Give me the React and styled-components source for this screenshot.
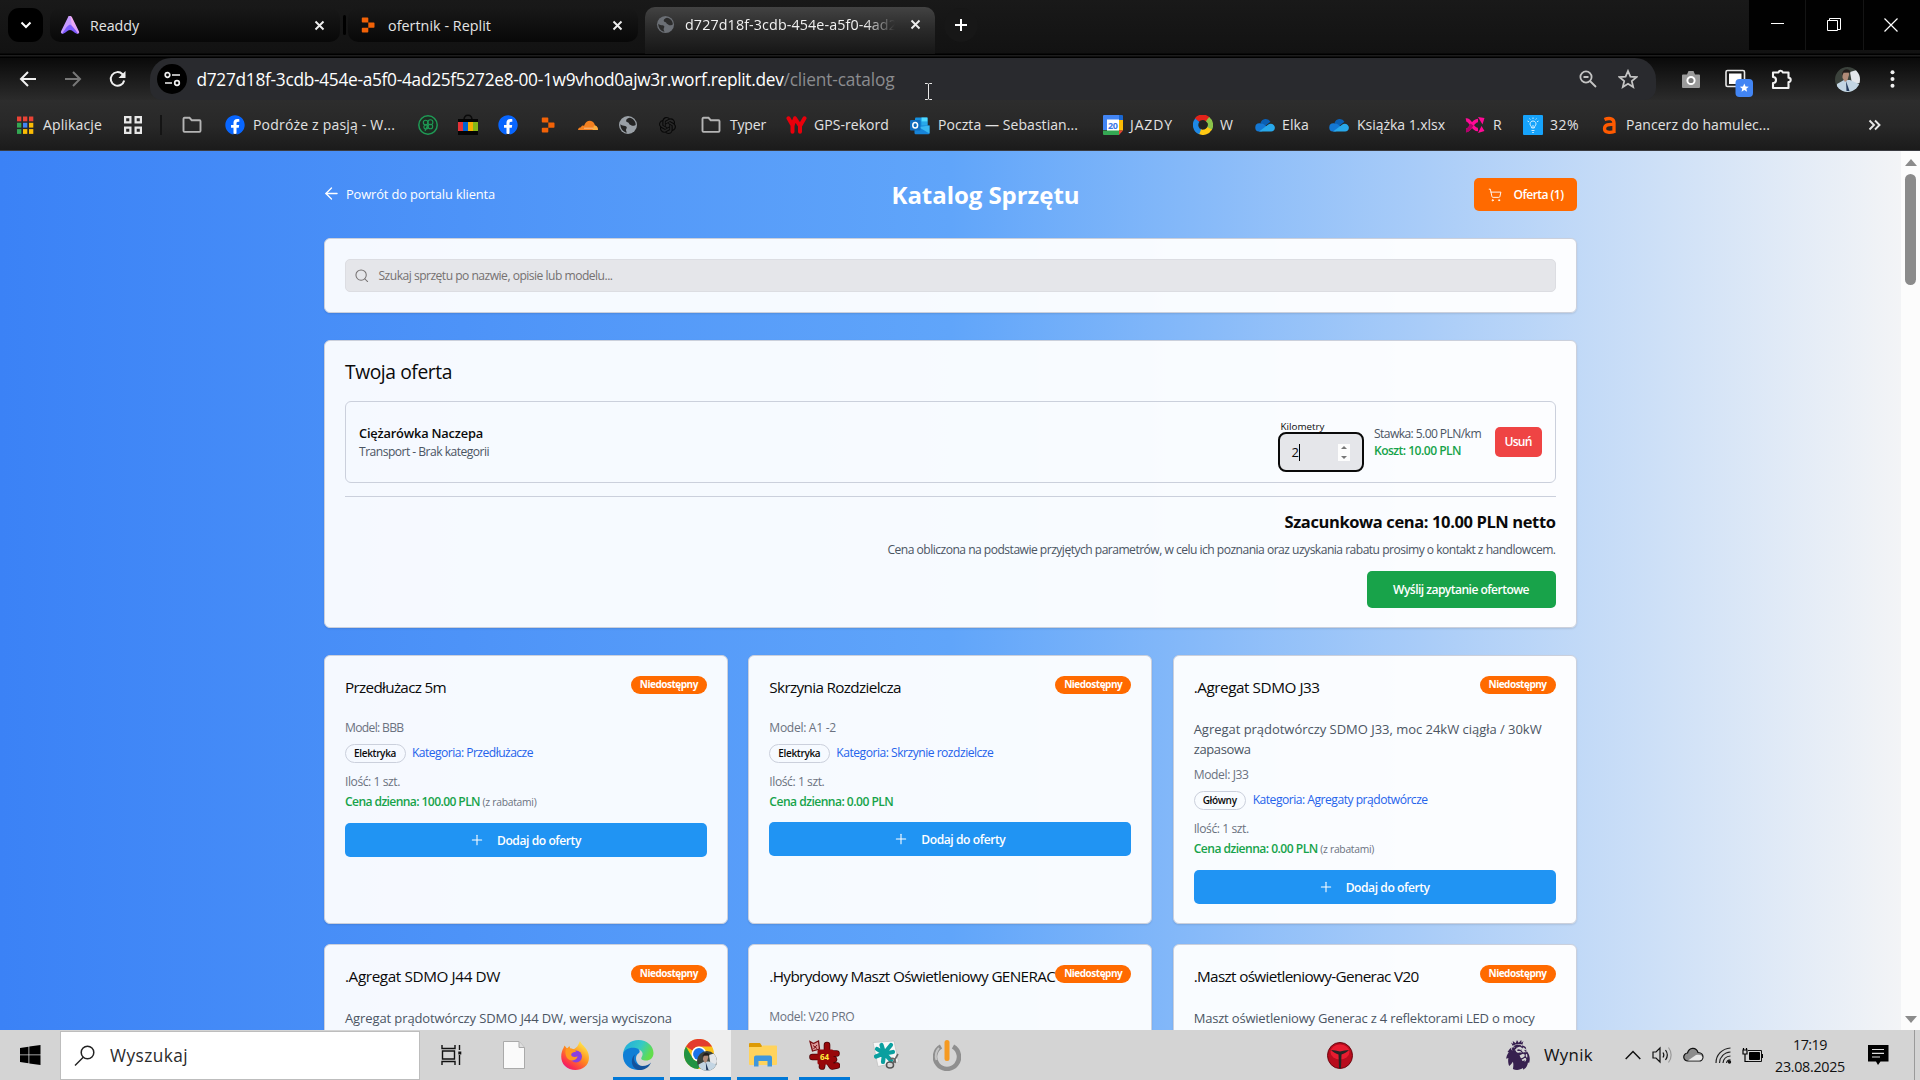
import React, { useLayoutEffect, useRef, useState } from "react";
import styled, { createGlobalStyle, css } from "styled-components";
import { SiOpenai, SiPremierleague } from "react-icons/si";
import { FaFacebook } from "react-icons/fa";
import { ArrowLeft, Search, ShoppingCart, Plus } from "lucide-react";

const Global = createGlobalStyle`
  *{box-sizing:border-box;}
  html,body{margin:0;height:100%;overflow:hidden;}
  body{font-family:"Open Sans","Noto Sans",sans-serif;color:#0a0a0a;}
  svg{display:block;flex:none;}
`;

/* ---------- text ---------- */
const Label = styled.span`
  display:block;flex:none;white-space:pre;
  font-size:${p => p.$size}px;
  font-weight:${p => p.$weight || 400};
  line-height:${p => p.$line || 20}px;
  color:${p => p.$color || "inherit"};
`;

/* Single line label, tracked so that it fills its design width. */
function Text({ width, size = 12.1, weight, line, color, children }) {
  const ref = useRef(null);
  const [tracking, setTracking] = useState(0);
  useLayoutEffect(() => {
    const range = document.createRange();
    range.selectNodeContents(ref.current);
    const natural = range.getBoundingClientRect().width;
    setTracking((width - natural) / children.length);
  }, []);
  return (
    <Label ref={ref} $size={size} $weight={weight} $line={line} $color={color}
      style={{ letterSpacing: tracking, width }}>{children}</Label>
  );
}

/* ---------- window ---------- */
const Window = styled.div`width:1920px;height:1080px;display:flex;flex-direction:column;overflow:hidden;background:#000;`;

const TabStrip = styled.div`
  height:58px;flex:none;display:flex;align-items:flex-start;padding-left:8px;
  background:linear-gradient(#191919 0,#121212 53px,#000 54px,#000 55px,#1d1d1d 55px,#1d1d1d 56px,#000 57px);
`;
const TabSearch = styled.div`width:35px;height:34px;margin-top:8px;border-radius:11px;background:#000;display:grid;place-items:center;`;
const Tab = styled.div`
  width:290px;height:34px;margin:8px 0 0 ${p => p.$gap}px;padding:0 15px 0 10px;border-radius:10px;
  display:flex;align-items:center;color:#e4e4e4;
  background:linear-gradient(#181818,#080808);
`;
const ActiveTab = styled.div`
  width:290px;height:47px;margin:7px 0 0 7px;padding:0 15px 12px 11px;border-radius:10px 10px 0 0;
  display:flex;align-items:center;color:#f1f1f1;background:linear-gradient(#434343,#2b2b2b 45%,#161616);
`;
const TabTitle = styled.div`
  margin-left:10px;padding-top:1px;flex:1;overflow:hidden;
  ${p => p.$fade && css`flex:0 0 211px;margin-right:14px;mask-image:linear-gradient(90deg,#000 180px,transparent 210px);`}
`;
const TabDivider = styled.div`width:3px;height:20px;margin:15px -3px 0 3px;border-radius:2px;background:#000;`;
const NewTab = styled.div`width:34px;height:34px;margin:8px 0 0 9px;border-radius:17px;background:#171717;display:grid;place-items:center;`;
const WindowButtons = styled.div`margin-left:auto;display:flex;gap:1px;background:#141414;`;
const WindowButton = styled.div`width:${p => p.$w}px;height:50px;background:#010101;padding:${p => p.$pad};`;

const Toolbar = styled.div`
  height:42px;flex:none;display:flex;align-items:center;padding-left:19px;
  background:linear-gradient(#0a0a0a,#2b2b2b);
`;
const NavButton = styled.div`width:45px;`;
const Omnibox = styled.div`
  width:1506px;height:42px;margin-left:-4px;padding:0 18px 0 7px;border-radius:21px 21px 12px 12px;
  background:#292a2e;display:flex;align-items:center;
`;
const SiteInfo = styled.div`width:30px;height:30px;margin-right:9.5px;border-radius:50%;background:#000;display:grid;place-items:center;`;
const Url = styled.div`display:flex;flex:1;padding-top:1px;`;
const OmniIcons = styled.div`display:flex;gap:20px;`;
const Extensions = styled.div`display:flex;align-items:center;padding-left:25px;`;
const ExtSlot = styled.div`width:${p => p.$w}px;padding-top:${p => p.$drop || 0}px;`;

const Bookmarks = styled.div`
  height:50px;flex:none;display:flex;align-items:center;padding-left:15px;color:#e2e2e2;
  background:linear-gradient(#2d2d2d,#282828 50%,#1b1b1b);
`;
const Bookmark = styled.div`flex:0 0 ${p => p.$w}px;display:flex;align-items:center;gap:${p => p.$gap ?? 8}px;`;
const BookmarkDivider = styled.div`width:2px;height:20px;margin-right:20px;background:#141414;`;
const ChromeEdge = styled.div`height:1px;flex:none;background:#3a3b40;`;

/* ---------- page ---------- */
const Viewport = styled.div`height:879px;flex:none;display:flex;overflow:hidden;`;
const Page = styled.main`
  width:1901px;padding:27px 324.5px 0 324px;display:flex;flex-direction:column;
  background:linear-gradient(90deg,#3b82f6,#60a5fa 50%,#f3f4f6);
`;
const ScrollTrack = styled.div`width:19px;background:#fcfcfc;display:flex;flex-direction:column;align-items:center;padding:8px 0 7px;`;
const ScrollArrow = styled.div`
  border:6.5px solid transparent;
  ${p => p.$up ? "border-top:0;border-bottom:7px solid #8b8b8b;" : "border-bottom:0;border-top:7px solid #8b8b8b;margin-top:auto;"}
`;
const ScrollThumb = styled.div`width:11px;height:111px;margin-top:8px;border-radius:6px;background:#8b8b8b;`;

const Header = styled.header`height:33px;flex:none;display:flex;align-items:center;color:#fff;`;
const BackLink = styled.div`width:250px;margin:-2px 0 0 -2px;display:flex;align-items:center;gap:5px;`;
const Title = styled.div`margin-left:319.5px;margin-right:auto;`;
const CartButton = styled.button`
  width:103px;height:33px;padding:0 0 0 14px;border:0;border-radius:5px;background:#ff6a00;color:#fff;
  font:inherit;display:flex;align-items:center;gap:12px;
`;
const Card = styled.section`
  border:1px solid #cbd0dc;border-radius:6px;background:rgba(255,255,255,.95);
  box-shadow:0 1px 2px rgba(0,0,0,.1);
`;
const SearchCard = styled(Card)`height:75px;flex:none;margin-top:27px;padding:20px;`;
const SearchField = styled.div`
  height:33px;padding:1px 8px 0;border:1px solid #dcdde2;border-radius:5px;background:#e5e6ea;color:#757171;
  display:flex;align-items:center;gap:9px;
`;
const OfferCard = styled(Card)`height:288px;flex:none;margin-top:27px;padding:17px 20px 20px;display:flex;flex-direction:column;`;
const OfferItem = styled.div`
  height:82px;flex:none;margin-top:16px;padding:0 13px;border:1px solid #cbd0dc;border-radius:6px;
  display:flex;align-items:center;
`;
const ItemInfo = styled.div`flex:1;`;
const Kilometers = styled.div`width:86px;height:56px;padding-top:7px;`;
const KmLabel = styled.div`padding-left:3px;height:11px;`;
const NumberField = styled.div`
  height:40px;padding:0 12px;border:2px solid #0a0a0a;border-radius:8px;background:#e5e6ea;
  display:flex;align-items:center;
`;
const Caret = styled.i`width:1px;height:17px;background:#000;`;
const Spinner = styled.div`
  width:12px;height:17px;margin-left:auto;background:#fdfdfd;display:flex;flex-direction:column;
  align-items:center;justify-content:space-between;padding:2px 0;
`;
const SpinArrow = styled.i`border:3px solid transparent;${p => p.$up ? "border-top:0;border-bottom:3px solid #777;" : "border-bottom:0;border-top:3px solid #777;"}`;
const Cost = styled.div`width:107px;margin:0 13.5px 0 10.5px;`;
const RemoveButton = styled.button`
  width:47px;height:30px;padding:0 0 0 10px;border:0;border-radius:5px;background:#ef4444;color:#fff;font:inherit;
`;
const Summary = styled.div`
  margin-top:13px;padding-top:13px;border-top:1px solid #cbd0dc;
  display:flex;flex-direction:column;align-items:flex-end;gap:4px;
`;
const SendButton = styled.button`
  width:189px;height:37px;margin-top:6px;padding:1px 0 0 26.5px;border:0;border-radius:5px;background:#18a34a;color:#fff;font:inherit;
`;
const Grid = styled.div`
  margin-top:27px;display:grid;grid-template-columns:repeat(3,1fr);grid-auto-rows:269px;gap:20.4px 20.5px;
`;
const ProductCard = styled(Card)`padding:20px;`;
const ProductHead = styled.div`height:42px;display:flex;justify-content:space-between;`;
const TitleSlot = styled.div`width:0;`;
const Status = styled.div`
  position:relative;width:76px;height:18px;padding-left:9px;border-radius:9px;background:#ff6a00;color:#fff;
`;
const Description = styled.div`margin:1px 0 6px;`;
const Tags = styled.div`height:19px;margin:6px 0 9px;display:flex;gap:6.5px;`;
const Tag = styled.span`height:19px;padding:0 8.5px 0 8px;border:1px solid #cbd0dc;border-radius:10px;`;
const Price = styled.div`display:flex;gap:2.5px;`;
const AddButton = styled.button`
  width:100%;height:33.5px;margin-top:10.2px;padding:1px 0 0 124px;border:0;border-radius:5px;background:#2094f3;color:#fff;font:inherit;
  display:flex;align-items:center;gap:12px;
`;

/* ---------- taskbar ---------- */
const Taskbar = styled.footer`height:50px;flex:none;display:flex;background:#d4d4d4;`;
const TaskSlot = styled.div`
  flex:0 0 ${p => p.$w}px;height:50px;display:grid;place-items:center;
  background:${p => (p.$active ? "#eee" : "none")};
  margin-right:${p => p.$gap || 0}px;
  ${p => p.$open && css`box-shadow:inset 0 -3px #0078d7;`}
`;
const StartSlot = styled.div`width:60px;padding:15px 0 0 20px;`;
const TaskSearch = styled.div`
  width:360px;height:49px;margin-top:1px;padding-left:13px;border:1px solid #bdbdbd;background:#fff;
  display:flex;align-items:center;gap:14px;color:#2b2b2b;
`;
const Tray = styled.div`margin-left:auto;height:50px;display:flex;align-items:center;color:#111;`;
const TrayIcon = styled.div`width:${p => p.$w}px;`;
const LionSlot = styled.div`width:41px;margin-left:-4px;`;
const Clock = styled.div`width:70px;margin-right:23px;display:flex;flex-direction:column;align-items:center;`;
const ShowDesktop = styled.div`width:6px;height:50px;margin-left:25px;border-left:1px solid #9a9a9a;`;

/* ---------- cursor ---------- */
const Cursor = styled.div`position:absolute;left:925px;top:83px;`;

/* ---------- drawings ---------- */
const Svg = ({ w = 20, h = w, vb, children, ...rest }) => (
  <svg width={w} height={h} viewBox={vb || `0 0 ${w} ${h}`} fill="none" {...rest}>{children}</svg>
);
const CloseX = () => <Svg w={11}><path d="M1.5 1.5l8 8M9.5 1.5l-8 8" stroke="#eee" strokeWidth="1.9" /></Svg>;
const ReplitIcon = () => (
  <Svg>
    <path d="M4.600 2.500h4.900a.8.8 0 0 1 .8.8v4.200H4.600a.8.8 0 0 1-.8-.8V3.300a.8.8 0 0 1 .8-.8zM10.300 7.500h5.400a.8.8 0 0 1 .8.8v3.600a.8.8 0 0 1-.8.8h-5.400zM4.600 12.700h5.700v4a.8.8 0 0 1-.8.8H4.600a.8.8 0 0 1-.8-.8v-3.200a.8.8 0 0 1 .8-.8z" fill="#f26207" />
  </Svg>
);
const Globe = ({ color = "#9aa0a6", ink = "#252525", size = 20 }) => (
  <Svg w={size} vb="0 0 20 20">
    <circle cx="10" cy="10" r="9" fill={color} />
    <path d="M11.500 2.800c-2 .7-3.800 1.700-3.300 3.400.4 1.300 2.600.8 2.800 2.300.2 1.300 1.700 1.200 2.500 1.900 1 .9 3.700.3 4.200-.6.1-3.400-2.600-6.500-6.200-7zM2.400 9.200c1.200 1.400 3.200 1.300 4.800 1.700 1.600.4 2 1.600 1.200 2.800-.7 1-.4 2.300.6 3.900-3.600-.2-6.800-4-6.600-8.400z" fill={ink} />
  </Svg>
);
const Folder = () => <Svg w={20} h={18}><path d="M1.500 14.700V3c0-.7.400-1.200 1-1.200h5l2.200 2.400h7.800c.6 0 1 .5 1 1.100v9.400c0 .7-.4 1.200-1 1.200h-15c-.6 0-1-.5-1-1.200z" stroke="#b4b4b4" strokeWidth="1.900" /></Svg>;
const Facebook = () => <Svg><circle cx="10" cy="10" r="9" fill="#fff" /><FaFacebook size={20} color="#0866ff" /></Svg>;
const OneDrive = () => (
  <Svg><path d="M5.500 8a5.500 5.500 0 0 1 10-1.300L10 11z" fill="#0a5fb4" /><path d="M4 16.500a4 4 0 0 1 .8-8.200c3 0 5 1.500 8 4.200l-6 4z" fill="#1478d4" /><path d="M4 16.500l9-6.800c.8-.7 1.600-1 2.700-1 2.300 0 4.200 1.800 4.200 4s-1.700 3.800-3.800 3.800z" fill="#28a8ea" /></Svg>
);
const Apps = () => {
  const colors = ["#ea4335", "#ea4335", "#ea4335", "#34a853", "#4285f4", "#fbbc04", "#34a853", "#fbbc04", "#fbbc04"];
  return <Svg>{colors.map((c, i) => <rect key={i} x={2 + (i % 3) * 6} y={1.5 + Math.floor(i / 3) * 6.3} width="4.3" height="4.8" fill={c} />)}</Svg>;
};
const Chrome = ({ size = 20 }) => (
  <Svg w={size} vb="0 0 32 32">
    <circle cx="16" cy="16" r="16" fill="#fbc116" />
    <path d="M2.100 8a16 16 0 0 1 27.800 0H16a8 8 0 0 0-7 4.200z" fill="#e33b2e" />
    <path d="M2.100 8A16 16 0 0 0 15 32l7.500-11.500L16 24a8 8 0 0 1-7-4z" fill="#229342" />
    <circle cx="16" cy="16" r="8" fill="#fff" /><circle cx="16" cy="16" r="6.300" fill="#1a73e8" />
  </Svg>
);
const ReaddyIcon = () => (
  <Svg w={20} h={20}>
    <defs><linearGradient id="rd" x1="0" y1="0" x2="1" y2="1"><stop offset="0" stopColor="#ffb4f0" /><stop offset="1" stopColor="#d59bff" /></linearGradient></defs>
    <path d="M8 2.300C8.700.7 11.300.7 12 2.300L19 16.500c.6 1.500-.4 2.500-1.700 2.200L10 10z" fill="url(#rd)" />
    <path d="M8 2.300C8.500 1 10 .8 10.500 1.200L12 11 2.700 18.700C1 18.500.4 17.500 1.200 16z" fill="#c79bff" />
    <path d="M10 9.500c2 1 5.500 5 7.800 9.100-3 .6-4.800-3.600-7.800-3.600s-4.500 4-8 3.600C3.500 17.500 6.500 10.500 10 9.500z" fill="#7d5cff" />
  </Svg>
);
const Bag = () => (
  <Svg w={20} h={22}><path d="M6 6c0-6.500 8-6.500 8 0" stroke="#0a0a0a" strokeWidth="1.500" /><path d="M0 5h20v16H0z" fill="#050505" /><path d="M0 8h5v9H0z" fill="#e53238" /><path d="M5 8h5v9H5z" fill="#0064d2" /><path d="M10 8h5v9h-5z" fill="#f5af02" /><path d="M15 8h5v9h-5z" fill="#86b817" /></Svg>
);
const Clover = () => (
  <Svg><circle cx="10" cy="10" r="9.200" stroke="#1f9a55" strokeWidth="1.500" fill="#1d2b22" /><g stroke="#1f9a55" strokeWidth="1.100"><circle cx="7.600" cy="7.600" r="2.300" /><circle cx="12.400" cy="7.200" r="2.500" /><circle cx="12.400" cy="11.500" r="2.300" /><circle cx="7.900" cy="12" r="2" /><path d="M10 9.500l-3 6.500" /></g></Svg>
);
const Cloud = () => (
  <Svg><path d="M0 15c.2-2 1.300-2.800 3-2.800.4-1.500 1.800-2 3-1.300C7 7.500 9.500 5.700 12 5.800c2.800.2 4.500 2.200 5 4.600 1.800.2 3 2 3 4.600z" fill="#f38020" /><path d="M14.500 15l1.500-4.600c2.200-.2 4 1.600 4 4.600z" fill="#faae40" /><path d="M6 13.200h9" stroke="#ffd9b0" strokeWidth=".7" /></Svg>
);
const Outlook = () => (
  <Svg><path d="M6 2.500h10.500a1 1 0 0 1 1 1V11H5V3.500a1 1 0 0 1 1-1z" fill="#1490df" /><path d="M11.500 2.500h6v4.200h-6z" fill="#50d9ff" /><path d="M11.500 6.700h6V11h-6z" fill="#28a8ea" /><path d="M4.500 10.500h15V18a1.200 1.200 0 0 1-1.200 1.200H5.700A1.200 1.200 0 0 1 4.500 18z" fill="#1784d9" /><path d="M19.500 10.500v8l-11-6.500z" fill="#38b6f1" /><rect x="0" y="5" width="10.500" height="10.500" rx="1" fill="#0f6cbd" /><ellipse cx="5.200" cy="10.200" rx="2.400" ry="2.800" stroke="#fff" strokeWidth="1.500" /></Svg>
);
const CalLabel = styled.text`font:700 9px "Open Sans",sans-serif;fill:#3b78e7;`;
const Calendar = () => (
  <Svg><path d="M1 0h15v5H5v10H0V1a1 1 0 0 1 1-1z" fill="#4285f4" /><path d="M4 4.500h12v11.500H4z" fill="#fff" /><path d="M16 0h3a1 1 0 0 1 1 1v4h-4z" fill="#1967d2" /><path d="M16 5h4v10.500h-4z" fill="#fbbc04" /><path d="M0 15.500h16V20H1a1 1 0 0 1-1-1z" fill="#34a853" /><path d="M16 15.500h4L16 20z" fill="#ea4335" /><CalLabel x="5" y="13.500" textLength="10">20</CalLabel></Svg>
);
const RecordLogo = () => <Svg w={21} h={18}><path d="M2.500 2.300l4 7v6.500M9 2.300L6.500 9.500M9 2.300l5 7.500v6M18.500 2.300L14 10" stroke="#e9000b" strokeWidth="4" strokeLinecap="round" /></Svg>;
const Pinwheel = () => (
  <Svg>
    <g strokeWidth="5.400">
      <path d="M3.800 5.100A7.300 7.300 0 0 1 15.200 4.800" stroke="#e2231a" />
      <path d="M14.500 4.200A7.300 7.300 0 0 1 16.300 14" stroke="#8bc34a" />
      <path d="M16.500 13.300A7.300 7.300 0 0 1 6.500 16.400" stroke="#ffc913" />
      <path d="M7.200 16.800A7.300 7.300 0 0 1 4.300 5.300" stroke="#1e88e5" />
    </g>
    <path d="M7 6.500l4-1.300 3.500 3.300-1 4.500-4 1.500L6 10.500z" fill="#222" />
  </Svg>
);
const Shuffle = () => <Svg><path d="M1 5c5-1 6 10 12 9.500M1 15.500c5 0 6-10 12-10" stroke="#ff0a96" strokeWidth="3.600" /><path d="M13 2l6.500 1-2 6.500zM13 18l6.500-2-3-5z" fill="#ff0a96" /><path d="M1 15.500c3 0 4.500-3.500 6-6" stroke="#b3006b" strokeWidth="3.600" /></Svg>;
const Bulb = () => <Svg><rect width="20" height="20" rx="1" fill="#16a3fb" /><path d="M7 9c0-4 6-4 6 0 0 1.500-1.500 2-1.700 4H8.700C8.500 11 7 10.500 7 9zM8.500 15.500h3M9.200 17.500h1.600M10 10v3M4.500 6l1.500.8M15.500 6l-1.500.8M10 2.500V4M6.500 3.500l.8 1M13.500 3.500l-.8 1" stroke="#fff" strokeWidth=".8" /></Svg>;
const Allegro = () => <Svg w={18} h={20}><path d="M4.500 4.500C8 3 14 2.500 14 8v10M14 9.500c-5-.5-9.500 0-9.500 4.200 0 4.300 6 4 9.500 3" stroke="#ff5a00" strokeWidth="3.300" /></Svg>;

const Avatar = () => (
  <Svg w={25} h={25}>
    <defs><clipPath id="av"><circle cx="12.500" cy="12.500" r="12.500" /></clipPath></defs>
    <g clipPath="url(#av)"><path d="M0 0h25v25H0z" fill="#3b423c" /><path d="M15 5l10-3v14l-8 1z" fill="#e3e6ea" /><path d="M2 17l7-4h6l9 4v9H2z" fill="#c3d5e3" /><path d="M7.500 5c2-3 7-2 6.500 3l-1.500 5-2.500 2-2.500-4z" fill="#b08a78" /><path d="M7 6c1-5 8-5 8.500-.5l-7 .3-1 3z" fill="#201c1b" /><path d="M11 14l3.500 10h-3z" fill="#253b5c" /></g>
  </Svg>
);
const Firefox = () => (
  <Svg w={29} h={29}>
    <defs><linearGradient id="ff" x1=".9" y1="0" x2=".2" y2="1"><stop offset=".1" stopColor="#ffe84a" /><stop offset=".5" stopColor="#ff8a1e" /><stop offset=".85" stopColor="#fc2d4f" /><stop offset="1" stopColor="#e31587" /></linearGradient></defs>
    <path d="M19 0c1 3 4 4.500 6.500 8.500C29.500 15 28.500 22 23.500 26S9 30 4 25-.5 12 2.500 7l1-2.500L6 7.500 8.500 5l1 3.500c2 0 4-.3 5-1.500 2.500-1.500 3-4.500 4.500-7z" fill="url(#ff)" />
    <circle cx="15" cy="15.500" r="6" fill="#8b3fe0" /><path d="M5 8c4-2 9 0 10 2.800-2 .5-4.500.6-4.800 3 0 2.200 4 3 6.500 1.500-1 4-5.500 5-8 3.800C5 17.500 3.500 12 5 8z" fill="#ff9a20" />
  </Svg>
);
const EdgeIcon = () => (
  <Svg w={31} h={30}>
    <defs><linearGradient id="eg" x1="0" y1="0" x2="1" y2=".4"><stop offset="0" stopColor="#1fa8e0" /><stop offset=".6" stopColor="#35c9c6" /><stop offset="1" stopColor="#62dd4c" /></linearGradient></defs>
    <path d="M0 14C1 5 7.500 0 15.500 0 24 0 30.500 6 30.500 13c0 5-3.500 7.500-7.500 7.500-3.500 0-5.500-1.300-4.500-3C22 12 17 9 12.500 9 6.500 9 1 11 0 14z" fill="url(#eg)" />
    <path d="M0 14.500C.5 9.500 7 7 12.500 8c4 .8 5 3 3.500 5-5 3-3.500 11 3 13.500l-2 3.400C6 31-.5 23 0 14.500z" fill="#0f7fd6" />
    <path d="M12.500 14c-4 5 0 12 7 12 4 0 6.500-1.500 8.500-3.500C26 27.500 21 30.500 16 30 8 29 6.500 18 12.500 14z" fill="#14539c" />
  </Svg>
);
const ChromeUser = () => (
  <Svg w={33} h={32}><Chrome size={30} /><g transform="translate(13 12) scale(.8)"><Avatar /></g></Svg>
);
const Explorer = () => <Svg w={28} h={24}><path d="M0 1a1 1 0 0 1 1-1h10l2 3v3H0z" fill="#dd9a04" /><path d="M0 4h12l2-1.500h13a1 1 0 0 1 1 1V21a1 1 0 0 1-1 1H1a1 1 0 0 1-1-1z" fill="#ffd35c" /><path d="M5 23.500V15c0-1.500.5-2.500 2-2.500h14c1.500 0 2 1 2 2.500v8.500h-4.500V18h-9v5.500z" fill="#3f97dc" /></Svg>;
const SplatLabel = styled.text`font:700 8px "Open Sans",sans-serif;fill:#ffee3a;`;
const Irfan64 = () => (
  <Svg w={31} h={31}>
    <g strokeLinecap="round" strokeLinejoin="round">
      <path d="M18 5v8M27.500 13.500H18M3.500 17H13M13 26.500l1-8M18 19l5 7.500 5-1M25 19.500l-5-1" stroke="#4d0507" strokeWidth="6.600" />
      <path d="M10 11h13v12H10z" fill="#98070a" stroke="#98070a" strokeWidth="3" />
      <path d="M18 5v8M27.500 13.500H18M3.500 17H13M13 26.500l1-8M18 19l5 7.500 5-1M25 19.500l-5-1" stroke="#98070a" strokeWidth="5" />
    </g>
    <path d="M1 1.500l3.500 2L9.500 1l1 8-7 2z" fill="#d99" stroke="#7a1014" strokeWidth="1.300" /><path d="M4 5.500l4 3M8 5L4.500 9" stroke="#7a1014" />
    <SplatLabel x="11" y="20">64</SplatLabel>
  </Svg>
);
const IrfanTeal = () => (
  <Svg w={28} h={30}>
    <path d="M1 2.500L22 1l4.500 21L6 26.500z" fill="#f7f7f7" stroke="#c2c2c2" strokeWidth=".8" />
    <path d="M12 13L9.500 5M12.500 13L19 5M13 13.500l8-1.500M13 14l6 6.500M12 14l-1 8M11.500 13.500L4 16.500M11.500 13L5 9" stroke="#0a9f9f" strokeWidth="4.200" strokeLinecap="round" />
    <ellipse cx="18" cy="25" rx="3.500" ry="3" stroke="#555" strokeWidth="1.600" /><path d="M18 19c4-2 6 1 5 4M21 23l5-9" stroke="#666" strokeWidth="1.600" />
  </Svg>
);
const Power = () => <Svg w={28} h={31}><path d="M8 6.500a12 12 0 1 0 12 0" stroke="#8f8f8f" strokeWidth="4.500" /><path d="M6 8a12 12 0 0 0-2.500 12" stroke="#c4c4c4" strokeWidth="2" /><rect x="11.500" y="0" width="5" height="21" rx="2.500" fill="#f59a22" /></Svg>;
const RedMask = () => <Svg w={26} h={27}><ellipse cx="13" cy="13.500" rx="12.500" ry="13" fill="#b80c1d" stroke="#6b0710" /><ellipse cx="13" cy="10" rx="9.500" ry="7.500" fill="#e81c30" /><path d="M4 8c3 0 6 1 9 1.500C16 9 19 8 22 8c-2 2.500-5 3.500-7.500 4.500L14 26h-2l-.5-13.500C9 11.500 6 10.500 4 8z" fill="#252525" /></Svg>;

/* ---------- sections ---------- */
function BookmarksBar() {
  const name = (width, text) => <Text width={width} size={14}>{text}</Text>;
  return (
    <Bookmarks>
      <Bookmark $w={108}><Apps />{name(59, "Aplikacje")}</Bookmark>
      <Bookmark $w={37}><Svg><g stroke="#e8e8e8" strokeWidth="2.200"><path d="M2.100 2.100h5.300v5.300H2.100zM12.600 2.100h5.300v5.300h-5.300zM2.100 12.600h5.300v5.300H2.100zM12.600 12.600h5.300v5.300h-5.300z" /></g></Svg></Bookmark>
      <BookmarkDivider />
      <Bookmark $w={43}><Folder /></Bookmark>
      <Bookmark $w={193}><Facebook />{name(142, "Podróże z pasją - W...")}</Bookmark>
      <Bookmark $w={40}><Clover /></Bookmark>
      <Bookmark $w={40}><Bag /></Bookmark>
      <Bookmark $w={40}><Facebook /></Bookmark>
      <Bookmark $w={40}><ReplitIcon /></Bookmark>
      <Bookmark $w={40}><Cloud /></Bookmark>
      <Bookmark $w={41}><Globe /></Bookmark>
      <Bookmark $w={42}><SiOpenai size={17} color="#080808" /></Bookmark>
      <Bookmark $w={85} $gap={9}><Folder />{name(36, "Typer")}</Bookmark>
      <Bookmark $w={124} $gap={7}><RecordLogo />{name(75, "GPS-rekord")}</Bookmark>
      <Bookmark $w={193}><Outlook />{name(140, "Poczta — Sebastian...")}</Bookmark>
      <Bookmark $w={90} $gap={7}><Calendar />{name(43, "JAZDY")}</Bookmark>
      <Bookmark $w={62} $gap={7}><Pinwheel />{name(14, "W")}</Bookmark>
      <Bookmark $w={74} $gap={7}><OneDrive />{name(27, "Elka")}</Bookmark>
      <Bookmark $w={136}><OneDrive />{name(88, "Książka 1.xlsx")}</Bookmark>
      <Bookmark $w={58}><Shuffle />{name(9, "R")}</Bookmark>
      <Bookmark $w={77} $gap={7}><Bulb />{name(29, "32%")}</Bookmark>
      <Bookmark $w={268}><Allegro />{name(144, "Pancerz do hamulec...")}</Bookmark>
      <Svg w={13} h={12}><path d="M1.500 1.500L6 6l-4.500 4.500M7 1.500L11.500 6 7 10.500" stroke="#e8e8e8" strokeWidth="1.900" /></Svg>
    </Bookmarks>
  );
}

const products = [
  { title: ["Przedłużacz 5m", 101], model: ["Model: BBB", 58.5], tag: ["Elektryka", 42], category: ["Kategoria: Przedłużacze", 121], price: ["Cena dzienna: 100.00 PLN", 135], discount: true },
  { title: ["Skrzynia Rozdzielcza", 131.5], model: ["Model: A1 -2", 66.5], tag: ["Elektryka", 42], category: ["Kategoria: Skrzynie rozdzielcze", 157], price: ["Cena dzienna: 0.00 PLN", 124] },
  { title: [".Agregat SDMO J33", 126], lines: [["Agregat prądotwórczy SDMO J33, moc 24kW ciągła / 30kW", 348], ["zapasowa", 57]], model: ["Model: J33", 55], tag: ["Główny", 34], category: ["Kategoria: Agregaty prądotwórcze", 175], price: ["Cena dzienna: 0.00 PLN", 124], discount: true },
  { title: [".Agregat SDMO J44 DW", 155], lines: [["Agregat prądotwórczy SDMO J44 DW, wersja wyciszona", 327]] },
  { title: [".Hybrydowy Maszt Oświetleniowy GENERAC", 286], model: ["Model: V20 PRO", 85] },
  { title: [".Maszt oświetleniowy-Generac V20", 225], lines: [["Maszt oświetleniowy Generac z 4 reflektorami LED o mocy", 341]] },
];

function Product({ title, lines, model, tag, category, price, discount }) {
  return (
    <ProductCard>
      <ProductHead>
        <TitleSlot><Text width={title[1]} size={15.3} weight={500} line={23}>{title[0]}</Text></TitleSlot>
        <Status><Text width={58} size={10} weight={700} line={17}>Niedostępny</Text></Status>
      </ProductHead>
      {lines && <Description>{lines.map(l => <Text key={l[0]} width={l[1]} size={13} line={20} color="#4b5563">{l[0]}</Text>)}</Description>}
      {model && <Text width={model[1]} line={20} color="#6b7280">{model[0]}</Text>}
      {tag && <>
        <Tags><Tag><Text width={tag[1]} size={10} weight={600} line={17}>{tag[0]}</Text></Tag><Text width={category[1]} line={17} color="#2563eb">{category[0]}</Text></Tags>
        <Text width={55} line={20} color="#6b7280">Ilość: 1 szt.</Text>
        <Price><Text width={price[1]} weight={600} color="#16a34a">{price[0]}</Text>{discount && <Text width={54} size={10.3} line={21} color="#6b7280">(z rabatami)</Text>}</Price>
        <AddButton><Plus size={16} strokeWidth={1.6} /><Text width={84} weight={600} line={21}>Dodaj do oferty</Text></AddButton>
      </>}
    </ProductCard>
  );
}

export default function App() {
  return (
    <Window>
      <Global />
      <TabStrip>
        <TabSearch><Svg w={12} h={8}><path d="M1.500 1.500L6 6l4.500-4.500" stroke="#fff" strokeWidth="2" /></Svg></TabSearch>
        <Tab $gap={7}><ReaddyIcon /><TabTitle><Text width={49} size={14.3}>Readdy</Text></TabTitle><CloseX /></Tab>
        <TabDivider />
        <Tab $gap={5}><ReplitIcon /><TabTitle><Text width={103} size={14.3}>ofertnik - Replit</Text></TabTitle><CloseX /></Tab>
        <ActiveTab><Globe color="#6b6f75" ink="#2c2c2c" size={19} /><TabTitle $fade><Text width={212} size={14.3}>d727d18f-3cdb-454e-a5f0-4ad2</Text></TabTitle><CloseX /></ActiveTab>
        <NewTab><Svg w={14}><path d="M7 1v12M1 7h12" stroke="#fff" strokeWidth="2" /></Svg></NewTab>
        <WindowButtons>
          <WindowButton $w={56} $pad="23px 0 0 22px"><Svg w={13} h={1}><path d="M0 .5h13" stroke="#fff" /></Svg></WindowButton>
          <WindowButton $w={57} $pad="18px 0 0 21px"><Svg w={14} h={14}><path d="M.5 2.500h10v10H.5zM2.500 2.500V.5h11v11h-3" stroke="#fff" /></Svg></WindowButton>
          <WindowButton $w={56} $pad="18px 0 0 20px"><Svg w={14} h={14}><path d="M.5.5l13 13M13.500.5l-13 13" stroke="#fff" strokeWidth="1.200" /></Svg></WindowButton>
        </WindowButtons>
      </TabStrip>

      <Toolbar>
        <NavButton><Svg w={18} h={16}><path d="M17 8H2M9 1L2 8l7 7" stroke="#f0f0f0" strokeWidth="2" /></Svg></NavButton>
        <NavButton><Svg w={18} h={16}><path d="M1 8h15M9 1l7 7-7 7" stroke="#777" strokeWidth="2" /></Svg></NavButton>
        <NavButton><Svg w={18} h={18}><path d="M15.200 10.500A6.800 6.800 0 1 1 13.500 4.200L15.500 6.500" stroke="#f0f0f0" strokeWidth="2" /><path d="M16.500 1v7h-7z" fill="#f0f0f0" /></Svg></NavButton>
        <Omnibox>
          <SiteInfo><Svg w={17} h={16}><g stroke="#f0f0f0" strokeWidth="1.700"><circle cx="3.500" cy="4" r="2.300" /><path d="M8 4h8M1 12h7" /><circle cx="13" cy="12" r="2.300" /></g></Svg></SiteInfo>
          <Url>
            <Text width={587} size={17.3} line={24} color="#fff">d727d18f-3cdb-454e-a5f0-4ad25f5272e8-00-1w9vhod0ajw3r.worf.replit.dev</Text>
            <Text width={111} size={17.3} line={24} color="#8b8c8f">/client-catalog</Text>
          </Url>
          <OmniIcons>
            <Svg w={20}><circle cx="8" cy="8" r="5.600" stroke="#c4c4c4" strokeWidth="1.800" /><path d="M5.500 8h5M12 12l6 6" stroke="#c4c4c4" strokeWidth="1.800" /></Svg>
            <Svg w={20}><path d="M10 2l2.400 5.600 6 .5-4.600 4 1.400 5.900-5.200-3.200L4.800 18l1.400-5.900-4.600-4 6-.5z" stroke="#c4c4c4" strokeWidth="1.800" /></Svg>
          </OmniIcons>
        </Omnibox>
        <Extensions>
          <ExtSlot $w={44}><Svg w={20}><path d="M2 5.500h4L7.500 2h5L14 5.500h4a1 1 0 0 1 1 1V18a1 1 0 0 1-1 1H2a1 1 0 0 1-1-1V6.500a1 1 0 0 1 1-1z" fill="#9b9b9b" /><circle cx="10" cy="11.500" r="3.600" fill="#777" stroke="#fff" strokeWidth="2" /></Svg></ExtSlot>
          <ExtSlot $w={46} $drop={7}><Svg w={29} h={28}><rect x="1" y="1.500" width="18.500" height="16" rx="1.500" stroke="#e8e8e8" strokeWidth="1.600" /><path d="M4 4.500h12.500v10.500H4z" fill="#fff" /><rect x="10.500" y="10" width="17.500" height="18" rx="4" fill="#4285f4" /><path d="M19.300 14.500l1.300 3 3.200.2-2.500 2 .8 3.100-2.800-1.700-2.800 1.700.8-3.100-2.500-2 3.200-.2z" fill="#fff" /></Svg></ExtSlot>
          <ExtSlot $w={64}><Svg w={22} h={22}><path d="M2 4.500h5.500a2.200 2.200 0 0 1 4.300 0H17.500v5.200a2.200 2.200 0 0 1 0 4.400V20H2v-5a3 3 0 0 0 0-6z" stroke="#f0f0f0" strokeWidth="2.100" strokeLinejoin="round" /></Svg></ExtSlot>
          <ExtSlot $w={55}><Avatar /></ExtSlot>
          <Svg w={5} h={18}><g fill="#f0f0f0"><circle cx="2.500" cy="2.200" r="2" /><circle cx="2.500" cy="9" r="2" /><circle cx="2.500" cy="15.800" r="2" /></g></Svg>
        </Extensions>
      </Toolbar>
      <BookmarksBar />
      <ChromeEdge />

      <Viewport>
        <Page>
          <Header>
            <BackLink><ArrowLeft size={19} strokeWidth={1.7} /><Text width={149} size={12.9}>Powrót do portalu klienta</Text></BackLink>
            <Title><Text width={188} size={24} weight={700} line={30}>Katalog Sprzętu</Text></Title>
            <CartButton><ShoppingCart size={14} strokeWidth={1.6} /><Text width={50} weight={600}>Oferta (1)</Text></CartButton>
          </Header>

          <SearchCard>
            <SearchField><Search size={15.5} strokeWidth={1.6} /><Text width={234}>Szukaj sprzętu po nazwie, opisie lub modelu...</Text></SearchField>
          </SearchCard>

          <OfferCard>
            <Text width={107} size={19.3} weight={500} line={27}>Twoja oferta</Text>
            <OfferItem>
              <ItemInfo>
                <Text width={124} size={12.8} weight={600} line={18}>Ciężarówka Naczepa</Text>
                <Text width={130} line={19} color="#4b5563">Transport - Brak kategorii</Text>
              </ItemInfo>
              <Kilometers>
                <KmLabel><Text width={44} size={9.8} weight={500} line={12}>Kilometry</Text></KmLabel>
                <NumberField><Text width={7} size={13}>2</Text><Caret /><Spinner><SpinArrow $up /><SpinArrow /></Spinner></NumberField>
              </Kilometers>
              <Cost>
                <Text width={107} line={17} color="#4b5563">Stawka: 5.00 PLN/km</Text>
                <Text width={87} line={17} weight={600} color="#16a34a">Koszt: 10.00 PLN</Text>
              </Cost>
              <RemoveButton><Text width={27} weight={600}>Usuń</Text></RemoveButton>
            </OfferItem>
            <Summary>
              <Text width={271} size={16.5} weight={700} line={24}>Szacunkowa cena: 10.00 PLN netto</Text>
              <Text width={668} line={23} color="#4b5563">Cena obliczona na podstawie przyjętych parametrów, w celu ich poznania oraz uzyskania rabatu prosimy o kontakt z handlowcem.</Text>
              <SendButton><Text width={136} weight={600}>Wyślij zapytanie ofertowe</Text></SendButton>
            </Summary>
          </OfferCard>

          <Grid>{products.map(p => <Product key={p.title[0]} {...p} />)}</Grid>
        </Page>
        <ScrollTrack><ScrollArrow $up /><ScrollThumb /><ScrollArrow /></ScrollTrack>
      </Viewport>

      <Taskbar>
        <StartSlot><Svg w={21} h={20}><path d="M0 3l8.500-1.300v7.800H0zM9.300 1.600L20.500 0v9.500H9.300zM0 10.300h8.500v8L0 17zM9.300 10.300h11.200V20L9.300 18.400z" fill="#000" /></Svg></StartSlot>
        <TaskSearch><Svg w={22} h={22}><circle cx="13.500" cy="7.500" r="6.300" stroke="#222" strokeWidth="1.500" /><path d="M9.500 12L1 20.500" stroke="#222" strokeWidth="1.500" /></Svg><Text width={78} size={17.3} line={26}>Wyszukaj</Text></TaskSearch>
        <TaskSlot $w={62}><Svg w={21} h={20}><path d="M1 0v3.500h13V0M1 20v-3.500h13V20M1.500 6h12v8h-12z" stroke="#111" strokeWidth="1.400" /><path d="M18.500 0v5M18.500 10v10" stroke="#111" strokeWidth="1.400" /><path d="M17.300 6.500h3v3h-3z" fill="#111" /></Svg></TaskSlot>
        <TaskSlot $w={63}><Svg w={22} h={28}><path d="M.5.5h15.500l5.500 6v21H.5z" fill="#fafafa" stroke="#aaa" /><path d="M16 .5v6h5.500" fill="#ddd" stroke="#aaa" /></Svg></TaskSlot>
        <TaskSlot $w={61} $gap={7}><Firefox /></TaskSlot>
        <TaskSlot $w={51} $gap={6} $open><EdgeIcon /></TaskSlot>
        <TaskSlot $w={61} $gap={6} $open $active><ChromeUser /></TaskSlot>
        <TaskSlot $w={51} $gap={11} $open><Explorer /></TaskSlot>
        <TaskSlot $w={51} $gap={5} $open><Irfan64 /></TaskSlot>
        <TaskSlot $w={61}><IrfanTeal /></TaskSlot>
        <TaskSlot $w={61}><Power /></TaskSlot>
        <Tray>
          <TrayIcon $w={180}><RedMask /></TrayIcon>
          <LionSlot><SiPremierleague size={30} color="#37204f" /></LionSlot>
          <TrayIcon $w={81}><Text width={49} size={16.8} line={26}>Wynik</Text></TrayIcon>
          <TrayIcon $w={27}><Svg w={16} h={10}><path d="M.7 9L8 1.500 15.300 9" stroke="#111" strokeWidth="1.500" /></Svg></TrayIcon>
          <TrayIcon $w={31}><Svg w={21} h={18}><path d="M1 6h3l4-4v14l-4-4H1z" stroke="#111" strokeWidth="1.200" /><path d="M11 6.500c1 1.500 1 3.500 0 5M13.500 4c2.200 3 2.200 7 0 10" stroke="#111" strokeWidth="1.200" /><path d="M16.500 1.500c3.500 4.500 3.500 10.500 0 15" stroke="#999" strokeWidth="1.200" /></Svg></TrayIcon>
          <TrayIcon $w={32}><Svg w={21} h={16}><path d="M5 14a4 4 0 0 1-.5-8C6 .5 13-.5 15 5.500c3 .2 5 2 5 4.500s-2 4-4 4z" fill="#8c8c8c" stroke="#111" strokeWidth="1.200" /><path d="M5 13.400L13 8c4-1 6.300.5 6.300 2.500s-1.300 2.900-3.300 2.900z" fill="#e8e8e8" /></Svg></TrayIcon>
          <TrayIcon $w={27}><Svg w={17} h={17}><g stroke="#222" strokeWidth="1.200"><path d="M1 16C1 8 7 1.500 15.500 1M4.500 16C5 10 9 5.500 15.500 5M8 16c.4-3.800 3-6.700 7.500-7M11.500 16c.2-1.500 1.500-3 4-3.200" /></g><circle cx="14.500" cy="15" r="1.700" fill="#111" /></Svg></TrayIcon>
          <TrayIcon $w={33}><Svg w={21} h={15}><path d="M7.500 4.500h10v7h-10z" fill="#000" stroke="#000" /><path d="M6 2.500h13.500v11H5" stroke="#111" /><path d="M20.500 6v4M1 2h4v4H1zM1.500 0v2M4.500 0v2M3 6v7.500h3" stroke="#000" strokeWidth="1.200" /></Svg></TrayIcon>
          <Clock><Text width={34} size={14.3} line={23}>17:19</Text><Text width={70} size={14.3} line={22}>23.08.2025</Text></Clock>
          <Svg w={21} h={20}><path d="M0 0h20.500v16.500h-8L10 20l-2-3.500H0z" fill="#000" /><path d="M4 4.500h12M4 8.300h12M4 12h8" stroke="#ddd" strokeWidth="1.200" /></Svg>
          <ShowDesktop />
        </Tray>
      </Taskbar>
      <Cursor><Svg w={7} h={17}><path d="M0 .5h2.500l1 .7 1-.7H7M3.500 1v15M0 16.500h2.500l1-.7 1 .7H7" stroke="#e8e8e8" /></Svg></Cursor>
    </Window>
  );
}
